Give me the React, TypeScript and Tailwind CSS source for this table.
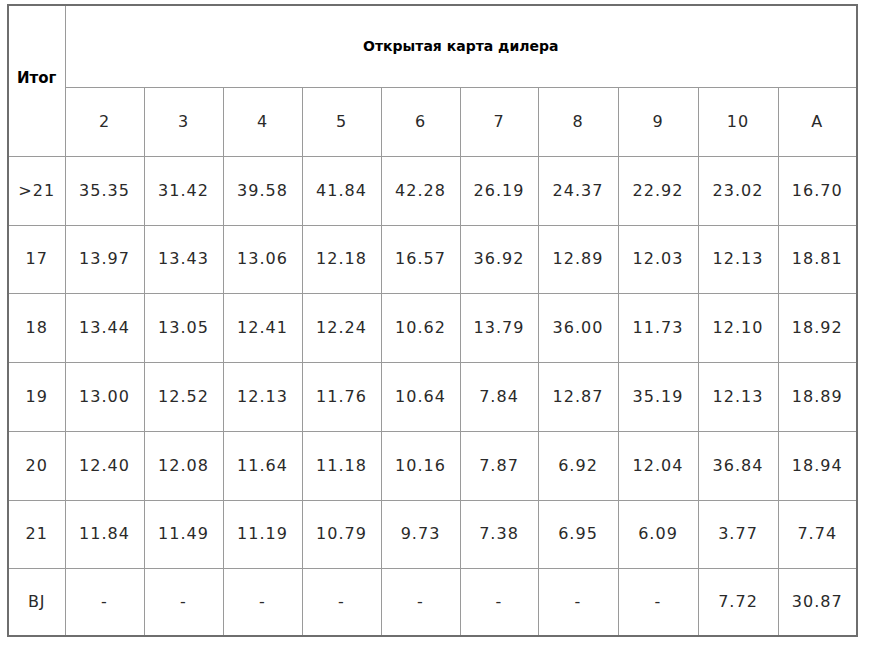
const cols = ["2", "3", "4", "5", "6", "7", "8", "9", "10", "A"];
const colWidths = [79, 79, 79, 79, 79, 78, 80, 80, 80, 79];

const rows: { label: string; values: string[]; h: string }[] = [
  { label: ">21", values: ["35.35", "31.42", "39.58", "41.84", "42.28", "26.19", "24.37", "22.92", "23.02", "16.70"], h: "h-[69px]" },
  { label: "17", values: ["13.97", "13.43", "13.06", "12.18", "16.57", "36.92", "12.89", "12.03", "12.13", "18.81"], h: "h-[68px]" },
  { label: "18", values: ["13.44", "13.05", "12.41", "12.24", "10.62", "13.79", "36.00", "11.73", "12.10", "18.92"], h: "h-[69px]" },
  { label: "19", values: ["13.00", "12.52", "12.13", "11.76", "10.64", "7.84", "12.87", "35.19", "12.13", "18.89"], h: "h-[69px]" },
  { label: "20", values: ["12.40", "12.08", "11.64", "11.18", "10.16", "7.87", "6.92", "12.04", "36.84", "18.94"], h: "h-[69px]" },
  { label: "21", values: ["11.84", "11.49", "11.19", "10.79", "9.73", "7.38", "6.95", "6.09", "3.77", "7.74"], h: "h-[68px]" },
  { label: "BJ", values: ["-", "-", "-", "-", "-", "-", "-", "-", "7.72", "30.87"], h: "h-[68px]" },
];

const cell = "border border-[#9a9a9a] text-center align-middle p-0";

export default function App() {
  return (
    <div className="min-h-screen bg-white pl-[7px] pt-[4px] font-['DejaVu_Sans',Verdana,sans-serif] text-[#2a2a2a]">
      <table className="table-fixed border-collapse w-[849px] border-2 border-[#6e6e6e]">
        <colgroup>
          <col style={{ width: 57 }} />
          {colWidths.map((w, i) => (
            <col key={i} style={{ width: w }} />
          ))}
        </colgroup>
        <thead>
          <tr className="h-[82px]">
            <th rowSpan={2} className={`${cell} text-[15px] font-bold text-black pb-[6px]`}>
              Итог
            </th>
            <th colSpan={10} className={`${cell} text-[14px] font-bold text-black`}>
              Открытая карта дилера
            </th>
          </tr>
          <tr className="h-[69px]">
            {cols.map((c) => (
              <td key={c} className={`${cell} text-[16px] tracking-[1px]`}>
                {c}
              </td>
            ))}
          </tr>
        </thead>
        <tbody>
          {rows.map((r) => (
            <tr key={r.label} className={r.h}>
              <td className={`${cell} text-[16px] tracking-[1px]`}>{r.label}</td>
              {r.values.map((v, i) => (
                <td key={i} className={`${cell} text-[16px] tracking-[1px]`}>
                  {v}
                </td>
              ))}
            </tr>
          ))}
        </tbody>
      </table>
    </div>
  );
}
